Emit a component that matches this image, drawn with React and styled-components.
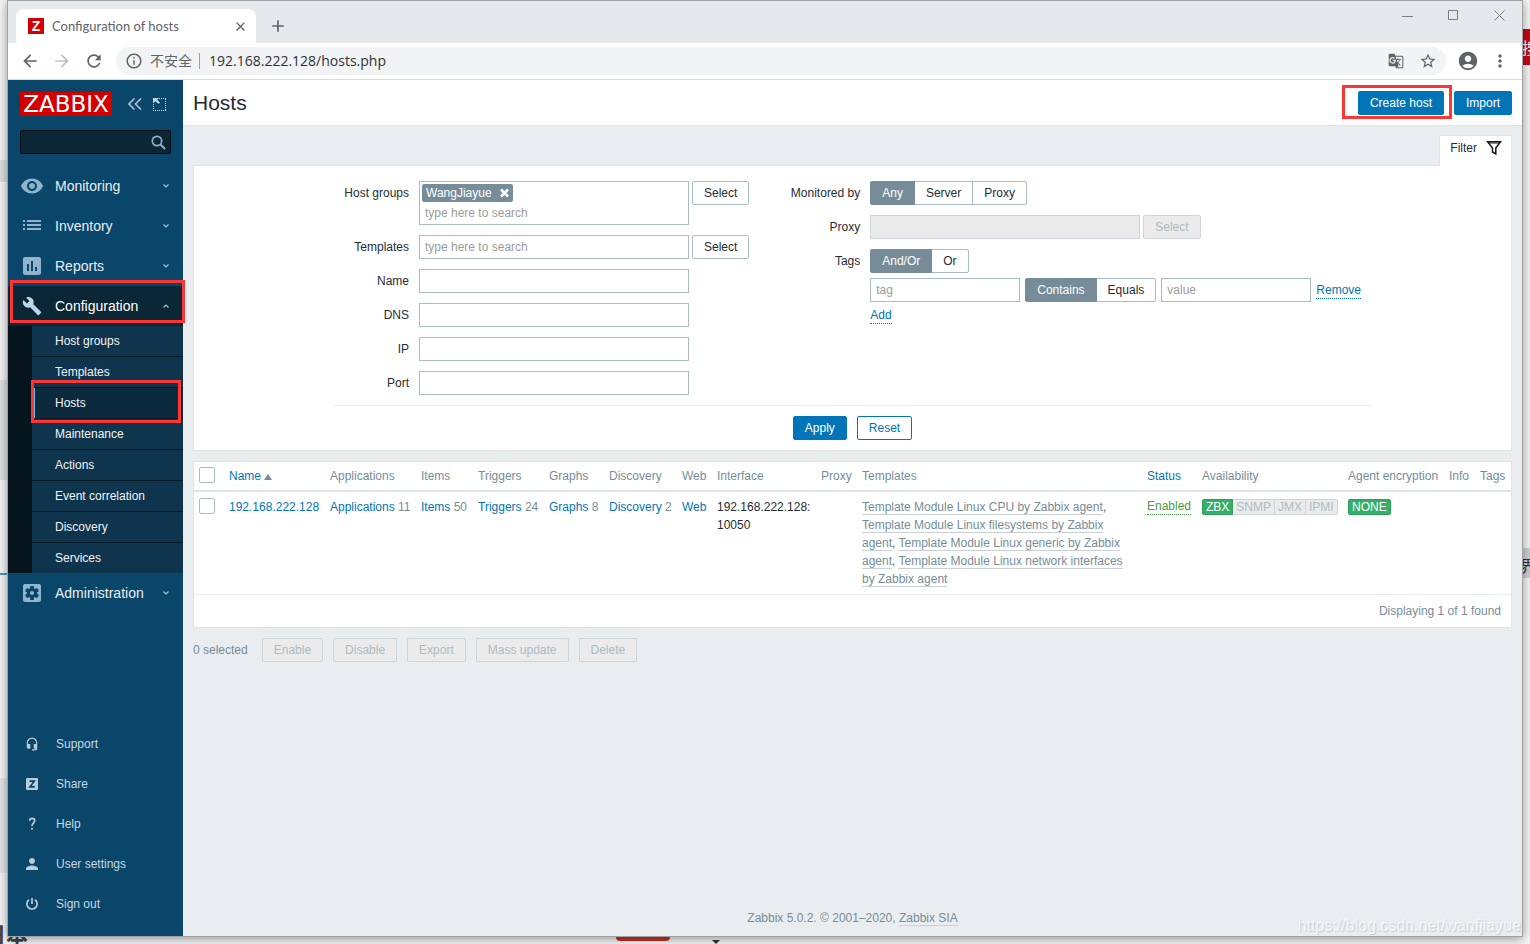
import React from "react";
import styled, { createGlobalStyle, css } from "styled-components";
import {
  MdArrowBack,
  MdArrowForward,
  MdRefresh,
  MdInfoOutline,
  MdGTranslate,
  MdStarBorder,
  MdAccountCircle,
  MdMoreVert,
  MdVisibility,
  MdAssessment,
  MdBuild,
  MdHeadsetMic,
  MdPerson,
  MdClose,
  MdAdd,
} from "react-icons/md";

const c = {
  navy: "#0a466a",
  link: "#0275b8",
  text: "#1f2c33",
  grey: "#768d99",
  line: "#dfe4e7",
  field: "#acbbc2",
  page: "#e9edf0",
};

const Global = createGlobalStyle`
  *, *::before, *::after { box-sizing: border-box; }
  body { margin: 0; font: 12px/18px "Liberation Sans", Arial, sans-serif; color: ${c.text}; }
  button, input { font: inherit; color: inherit; margin: 0; }
  ul { list-style: none; margin: 0; padding: 0; }
  svg { display: block; flex: none; }
`;

/* ---------- desktop behind the browser ---------- */

const Desktop = styled.div`
  position: relative;
  display: flex;
  min-height: 100vh;
  padding: 0 7px 7px;
  background: #f6f6f7;
  overflow: hidden;
`;

const Patch = styled.div`
  position: absolute;
  width: ${(p) => p.$w}px;
  height: ${(p) => p.$h}px;
  top: ${(p) => p.$top}px;
  ${(p) => p.$side}: ${(p) => p.$x || 0}px;
  background: ${(p) => p.$bg};
`;

const PillBehind = styled.div`
  position: absolute;
  left: 616px;
  bottom: 3px;
  width: 54px;
  height: 20px;
  border-radius: 4px;
  background: #c9302c;
`;

const ArrowBehind = styled.div`
  position: absolute;
  left: 712px;
  bottom: 0;
  border: 4px solid transparent;
  border-top-color: #333;
  border-bottom: 0;
`;

const GlyphBehind = styled.span`
  position: absolute;
  ${(p) => p.$side}: ${(p) => p.$x}px;
  top: ${(p) => p.$top}px;
  font: ${(p) => p.$font} "Noto Sans CJK SC", sans-serif;
  color: ${(p) => p.$color};
  white-space: nowrap;
`;

const Window = styled.div`
  position: relative;
  flex: 1;
  min-width: 0;
  display: flex;
  flex-direction: column;
  border: 1px solid #a0a1a3;
  background: ${c.page};
  box-shadow: 0 2px 10px rgba(0, 0, 0, 0.4);
`;

/* ---------- browser chrome ---------- */

const IconButton = styled.button`
  display: flex;
  align-items: center;
  justify-content: center;
  width: ${(p) => p.$size || 20}px;
  height: ${(p) => p.$size || 20}px;
  padding: 0;
  border: 0;
  background: none;
  color: ${(p) => p.$color || "#5f6368"};
`;

const TabStrip = styled.div`
  display: flex;
  align-items: flex-end;
  height: 42px;
  padding-left: 8px;
  background: #e6e9ec;
`;

const Tab = styled.div`
  display: flex;
  align-items: center;
  gap: 8px;
  width: 240px;
  height: 34px;
  padding: 0 6px 0 12px;
  border-radius: 8px 8px 0 0;
  background: #fff;
  font: 13px/18px Lato, "Open Sans", sans-serif;
  color: #5f6368;
`;

const TabTitle = styled.span`
  flex: 1;
  white-space: nowrap;
`;

const Favicon = styled.span`
  width: 16px;
  height: 16px;
  background: #d40000;
  color: #fff;
  font: bold 14px/16px "Liberation Sans", sans-serif;
  text-align: center;
`;

const NewTab = styled.div`
  padding: 0 0 7px 12px;
`;

const WindowButtons = styled.div`
  display: flex;
  gap: 26px;
  align-self: flex-start;
  margin-left: auto;
  padding: 4px 13px 0 0;
`;

const Toolbar = styled.div`
  display: flex;
  align-items: center;
  gap: 12px;
  height: 37px;
  padding: 0 12px;
  background: #fff;
  border-bottom: 1px solid #d9dbde;
`;

const AddressBar = styled.div`
  flex: 1;
  display: flex;
  align-items: center;
  gap: 7px;
  height: 28px;
  padding: 0 8px 0 9px;
  border-radius: 14px;
  background: #f1f3f4;
  font: 14px/18px "Open Sans", "Noto Sans CJK SC", sans-serif;
  color: #5f6368;
`;

const AddressActions = styled.div`
  display: flex;
  gap: 12px;
`;

const Insecure = styled.span`
  padding-right: 7px;
  margin-right: 2px;
  border-right: 1px solid #9aa0a6;
  line-height: 16px;
`;

const AddressInput = styled.input`
  flex: 1;
  min-width: 0;
  padding: 0;
  border: 0;
  background: none;
  color: #303236;
`;

/* ---------- sidebar ---------- */

const Page = styled.div`
  flex: 1;
  display: flex;
  min-height: 0;
`;

const Sidebar = styled.nav`
  flex: none;
  display: flex;
  flex-direction: column;
  width: 175px;
  padding-bottom: 12px;
  background: ${c.navy};
`;

const SidebarHead = styled.div`
  display: flex;
  align-items: center;
  padding: 12px 12px 14px;
`;

const Logo = styled.a`
  flex: none;
  width: 92px;
  height: 24px;
  margin-right: 16px;
  background: #d40000;
  color: #fff;
  font: 23px/24px "DejaVu Sans", sans-serif;
  text-align: center;
  text-decoration: none;
`;

const HeadIcons = styled.div`
  display: flex;
  gap: 10px;
`;

const Search = styled.form`
  display: flex;
  align-items: center;
  height: 24px;
  margin: 0 12px 12px;
  padding-right: 4px;
  border: 1px solid #050d12;
  border-radius: 2px;
  background: #0b2635;
`;

const SearchInput = styled.input`
  flex: 1;
  min-width: 0;
  padding: 0 4px;
  border: 0;
  background: none;
  color: #fff;
`;

const MenuItem = styled.li`
  position: relative;
`;

const MenuLink = styled.a`
  display: flex;
  align-items: center;
  height: 40px;
  padding: 0 14px 0 12px;
  font-size: 14px;
  color: ${(p) => (p.$open ? "#fff" : "#ebeef0")};
  background: ${(p) => (p.$open ? "#0b2635" : "none")};
  text-decoration: none;
`;

const MenuIcon = styled.span`
  display: flex;
  justify-content: center;
  width: 24px;
  margin-right: 11px;
  color: ${(p) => (p.$open ? "#b9d9ee" : "#8fb4cc")};
`;

const MenuLabel = styled.span`
  flex: 1;
`;

const SubMenu = styled.ul`
  padding-left: 24px;
  background: #05141d;
`;

const SubItem = styled.li`
  position: relative;
  border-bottom: 1px solid #051923;
  &:last-child { border-bottom: 0; }
`;

const SubLink = styled.a`
  display: block;
  height: 30px;
  padding-left: 20px;
  line-height: 30px;
  border-left: 3px solid ${(p) => (p.$active ? "#78b6de" : "#0f344d")};
  background: ${(p) => (p.$active ? "#0b2a3d" : "#0f344d")};
  color: #f2f4f5;
  text-decoration: none;
`;

const FootMenu = styled.ul`
  margin-top: auto;
`;

const FootLink = styled.a`
  display: flex;
  align-items: center;
  gap: 16px;
  height: 40px;
  padding-left: 16px;
  color: #c9d8e1;
  text-decoration: none;
`;

const FootIcon = styled.span`
  display: flex;
  justify-content: center;
  width: 16px;
  font-size: 16px;
  color: #b8ccd8;
`;

/* red frame drawn over a control */
const Mark = styled.span`
  position: absolute;
  z-index: 2;
  inset: ${(p) => p.$inset};
  border: 3px solid #fc3535;
  pointer-events: none;
`;

/* ---------- content ---------- */

const Main = styled.main`
  flex: 1;
  min-width: 0;
  display: flex;
  flex-direction: column;
`;

const Header = styled.header`
  display: flex;
  align-items: center;
  justify-content: space-between;
  height: 46px;
  padding: 0 10px;
  background: #fff;
  border-bottom: 1px solid ${c.line};
`;

const Title = styled.h1`
  margin: 0;
  font-size: 21px;
  font-weight: normal;
  line-height: 24px;
`;

const Buttons = styled.div`
  display: flex;
  justify-content: ${(p) => (p.$center ? "center" : "flex-start")};
  gap: 10px;
`;

const Marked = styled.div`
  position: relative;
`;

const Button = styled.button`
  flex: none;
  height: 24px;
  padding: 0 11px;
  border: 1px solid ${c.link};
  border-radius: 2px;
  background: ${c.link};
  color: #fff;
  line-height: 22px;
  ${(p) => p.$kind === "outline" && css`
    background: #fff;
    color: ${c.link};
  `}
  ${(p) => p.$kind === "plain" && css`
    border-color: ${c.field};
    background: #fff;
    color: ${c.text};
  `}
  &:disabled {
    border-color: #ccd5d9;
    background: #ebebeb;
    color: ${c.field};
  }
`;

const Body = styled.div`
  padding: 9px 10px 0;
`;

const FilterTab = styled.button`
  position: relative;
  z-index: 1;
  display: flex;
  align-items: center;
  gap: 9px;
  height: 31px;
  margin: 0 0 -1px auto;
  padding: 0 9px 7px 10px;
  border: 1px solid ${c.line};
  border-bottom: 0;
  background: #fff;
`;

const FilterPanel = styled.form`
  display: flex;
  flex-direction: column;
  align-items: center;
  padding: 15px 10px 10px;
  border: 1px solid ${c.line};
  background: #fff;
`;

const FilterInner = styled.div`
  width: 1037px;
  max-width: 100%;
`;

const FilterColumns = styled.div`
  display: flex;
  justify-content: space-between;
  padding: 0 10px 10px 0;
  margin-bottom: 10px;
  border-bottom: 1px solid ${c.page};
`;

const Fields = styled.div`
  display: grid;
  grid-template-columns: ${(p) => p.$label}px auto;
  gap: 10px;
  align-content: start;
`;

const Label = styled.label`
  line-height: 24px;
  text-align: right;
`;

const Cell = styled.div`
  display: flex;
  flex-wrap: wrap;
  align-items: flex-start;
  gap: ${(p) => p.$gap || 3}px;
`;

const Stack = styled.div`
  display: flex;
  flex-direction: column;
  align-items: flex-start;
  gap: 5px;
`;

const Input = styled.input`
  width: ${(p) => p.$w || 270}px;
  height: 24px;
  padding: 0 5px;
  border: 1px solid ${c.field};
  background: #fff;
  &::placeholder { color: #9c9c9c; opacity: 1; }
  &:disabled { border-color: #ccd5d9; background: #ebebeb; }
`;

const MultiSelect = styled.div`
  width: 270px;
  padding: 2px;
  border: 1px solid ${c.field};
`;

const Chip = styled.span`
  display: flex;
  align-items: center;
  gap: 7px;
  width: max-content;
  height: 18px;
  padding: 0 3px 0 4px;
  border-radius: 2px;
  background: ${c.grey};
  color: #fff;
`;

const BareInput = styled.input`
  display: block;
  width: 100%;
  height: 20px;
  padding: 2px 3px 0;
  border: 0;
  &::placeholder { color: #9c9c9c; opacity: 1; }
`;

const Segments = styled.div`
  display: flex;
`;

const Segment = styled.label`
  height: 24px;
  padding: 0 11px;
  margin-left: -1px;
  border: 1px solid ${c.field};
  line-height: 22px;
  &:first-child { margin-left: 0; border-radius: 2px 0 0 2px; }
  &:last-child { border-radius: 0 2px 2px 0; }
  &:has(input:checked) {
    position: relative;
    border-color: ${c.grey};
    background: ${c.grey};
    color: #fff;
  }
`;

const HiddenRadio = styled.input`
  position: absolute;
  width: 1px;
  height: 1px;
  opacity: 0;
`;

const DottedButton = styled.button`
  display: block;
  padding: 0;
  border: 0;
  border-bottom: 1px dotted ${(p) => p.$color || c.link};
  background: none;
  color: ${(p) => p.$color || c.link};
  line-height: 16px;
`;

const TagRow = styled.div`
  display: flex;
  align-items: center;
  gap: 5px;
`;

/* ---------- host table ---------- */

const HostTable = styled.table`
  width: 100%;
  margin-top: 10px;
  table-layout: fixed;
  border-collapse: separate;
  border-spacing: 0;
  border: 1px solid ${c.line};
  background: #fff;
`;

const Col = styled.col`
  width: ${(p) => (p.$w ? `${p.$w}px` : "auto")};
`;

const Th = styled.th`
  height: 30px;
  padding: 5px 5px 0;
  border-bottom: 2px solid ${c.line};
  color: ${c.grey};
  font-weight: normal;
  text-align: left;
  vertical-align: top;
  white-space: nowrap;
`;

const Td = styled.td`
  padding: 6px 5px;
  border-bottom: 1px solid ${c.page};
  vertical-align: top;
  white-space: ${(p) => (p.$wrap ? "normal" : "nowrap")};
  color: ${(p) => p.$color || c.text};
`;

const FootTd = styled.td`
  height: 32px;
  padding: 0 10px;
  color: ${c.grey};
  text-align: right;
`;

const Check = styled.input`
  appearance: none;
  display: block;
  width: 16px;
  height: 16px;
  border: 1px solid ${c.field};
  border-radius: 2px;
  background: #fff;
`;

const Link = styled.a`
  color: ${c.link};
  text-decoration: none;
`;

const SortMark = styled.span`
  display: inline-block;
  margin-left: 3px;
  border: 4px solid transparent;
  border-top: 0;
  border-bottom: 6px solid ${c.grey};
`;

const GreyLink = styled.a`
  border-bottom: 1px solid #c9d1d5;
  color: ${c.grey};
  text-decoration: none;
`;

const Badges = styled.div`
  display: flex;
  padding-top: 1px;
`;

const Badge = styled.span`
  height: 16px;
  padding: 0 3px;
  border: 1px solid ${(p) => (p.$on ? "#2f9f5e" : "#ccd5d9")};
  border-left-width: ${(p) => (p.$joined ? 0 : 1)}px;
  background: ${(p) => (p.$on ? "#34af67" : "#ebebeb")};
  color: ${(p) => (p.$on ? "#fff" : c.field)};
  line-height: 15px;
  &:first-child { border-radius: 2px 0 0 2px; }
  &:last-child { border-radius: 0 2px 2px 0; }
  &:only-child { border-radius: 2px; }
`;

const Actions = styled.div`
  display: flex;
  align-items: center;
  gap: 10px;
  padding-top: 10px;
  color: ${c.grey};
`;

const Selected = styled.span`
  margin-right: 4px;
`;

const Footer = styled.footer`
  margin-top: auto;
  padding: 10px 10px 9px;
  color: ${c.grey};
  text-align: center;
`;

const Watermark = styled.div`
  position: absolute;
  right: 1px;
  bottom: 1px;
  color: rgba(255, 255, 255, 0.7);
  font-size: 16px;
  text-shadow: 1px 1px 1px rgba(120, 130, 140, 0.3);
`;

/* ---------- drawings ---------- */

const ListIcon = () => (
  <svg width="18" height="12" viewBox="0 0 18 12" fill="currentColor">
    <path d="M0 0h2v2H0zM4 0h14v2H4zM0 4h2v2H0zM4 4h14v2H4zM0 8h2v2H0zM4 8h14v2H4z" />
  </svg>
);

const GearIcon = () => (
  <svg width="18" height="18" viewBox="0 0 18 18">
    <rect width="18" height="18" rx="2" fill="currentColor" />
    <g fill={c.navy}>
      <circle cx="9" cy="9" r="5" />
      {[0, 60, 120].map((a) => (
        <rect key={a} x="7" y="2" width="4" height="14" rx="1" transform={`rotate(${a} 9 9)`} />
      ))}
    </g>
    <circle cx="9" cy="9" r="2" fill="currentColor" />
  </svg>
);

const Chevron = ({ up }) => (
  <svg width="6" height="4" viewBox="0 0 6 4" fill="none" stroke="#a9c3d3" strokeWidth="1.2">
    <path d={up ? "M.5 3.5 3 1l2.5 2.5" : "M.5.5 3 3l2.500-2.500"} />
  </svg>
);

const CollapseIcon = () => (
  <svg width="14" height="12" viewBox="0 0 14 12" fill="none" stroke="#a9c3d3" strokeWidth="1.6">
    <path d="M6.500.5 1 6l5.500 5.500M13 .5 7.500 6l5.500 5.500" />
  </svg>
);

const KioskIcon = () => (
  <svg width="13" height="13" viewBox="0 0 13 13">
    <path d="M6 .5h7M12.500 1v12M.5 6v7M0 12.500h13" stroke="#c5d6e1" strokeDasharray="1 1" fill="none" />
    <path d="M0 0h6L4.200 1.800 7 4.600 5.600 6 2.300 3.200 0 5.500z" fill="#c5d6e1" />
  </svg>
);

const SearchIcon = () => (
  <svg width="15" height="15" viewBox="0 0 15 15" fill="none" stroke="#8fb0c4">
    <circle cx="6" cy="6" r="4.700" strokeWidth="1.700" />
    <path d="m9.500 9.500 4.500 4.500" strokeWidth="2" />
  </svg>
);

const FunnelIcon = () => (
  <svg width="16" height="16" viewBox="0 0 16 16" fill="none" stroke="#1a1a1a" strokeWidth="1.500">
    <path d="M1.500 1.700h13L9.800 8v6L6.500 12V8z" />
    <path d="M2 3h12" strokeWidth="1" />
  </svg>
);

const ShareIcon = () => (
  <svg width="12" height="12" viewBox="0 0 12 12">
    <rect width="12" height="12" rx="1" fill="currentColor" />
    <path d="M3.500 3.200h4.800L4 8.800h4.800" fill="none" stroke={c.navy} strokeWidth="1.700" />
  </svg>
);

const HelpIcon = () => (
  <svg width="12" height="14" viewBox="0 0 12 14" fill="none" stroke="currentColor" strokeWidth="1.700">
    <path d="M3.500 3.800C3.500 .6 8.700.6 8.700 3.800 8.700 6 6 6 6 9M6 10.800v2" />
  </svg>
);

const PowerIcon = () => (
  <svg width="12" height="12" viewBox="0 0 12 12" fill="none" stroke="currentColor" strokeWidth="1.700">
    <path d="M6 0v6M3 1.800a5.100 5.100 0 1 0 6 0" />
  </svg>
);

const CrossIcon = () => (
  <svg width="11" height="10" viewBox="0 0 11 10" stroke="#fff" strokeWidth="2.600">
    <path d="m2 1.500 7 7M9 1.500l-7 7" />
  </svg>
);

const MinIcon = () => (
  <svg width="11" height="11" viewBox="0 0 11 11" stroke="#7b7d80"><path d="M0 6.500h11" /></svg>
);
const MaxIcon = () => (
  <svg width="11" height="11" viewBox="0 0 11 11" stroke="#7b7d80" fill="none"><path d="M.5.5h9v9h-9z" /></svg>
);
const CloseIcon = () => (
  <svg width="11" height="11" viewBox="0 0 11 11" stroke="#7b7d80"><path d="m.5.500 10 10M10.500.500l-10 10" /></svg>
);

/* ---------- data ---------- */

const menu = [
  { label: "Monitoring", icon: <MdVisibility size={24} /> },
  { label: "Inventory", icon: <ListIcon /> },
  { label: "Reports", icon: <MdAssessment size={24} /> },
  {
    label: "Configuration",
    icon: <MdBuild size={20} />,
    items: ["Host groups", "Templates", "Hosts", "Maintenance", "Actions", "Event correlation", "Discovery", "Services"],
  },
  { label: "Administration", icon: <GearIcon /> },
];

const footMenu = [
  ["Support", <MdHeadsetMic size={14} />],
  ["Share", <ShareIcon />],
  ["Help", <HelpIcon />],
  ["User settings", <MdPerson size={18} />],
  ["Sign out", <PowerIcon />],
];

const columns = [
  ["Applications", 91], ["Items", 57], ["Triggers", 71], ["Graphs", 60], ["Discovery", 73], ["Web", 35],
  ["Interface", 104], ["Proxy", 41], ["Templates", 0], ["Status", 55], ["Availability", 146],
  ["Agent encryption", 101], ["Info", 31], ["Tags", 36],
];

const counts = [["Applications", 11], ["Items", 50], ["Triggers", 24], ["Graphs", 8], ["Discovery", 2], ["Web", null]];

const templates = [
  "Template Module Linux CPU by Zabbix agent",
  "Template Module Linux filesystems by Zabbix agent",
  "Template Module Linux generic by Zabbix agent",
  "Template Module Linux network interfaces by Zabbix agent",
];

function SegmentGroup({ name, options }) {
  return (
    <Segments role="radiogroup" aria-label={name}>
      {options.map((o, i) => (
        <Segment key={o}>
          <HiddenRadio type="radio" name={name} defaultChecked={i === 0} />
          {o}
        </Segment>
      ))}
    </Segments>
  );
}

function Chrome() {
  return (
    <>
      <TabStrip>
        <Tab>
          <Favicon>Z</Favicon>
          <TabTitle>Configuration of hosts</TabTitle>
          <IconButton aria-label="Close tab"><MdClose size={15} /></IconButton>
        </Tab>
        <NewTab>
          <IconButton aria-label="New tab"><MdAdd size={20} /></IconButton>
        </NewTab>
        <WindowButtons>
          <IconButton aria-label="Minimize"><MinIcon /></IconButton>
          <IconButton aria-label="Maximize"><MaxIcon /></IconButton>
          <IconButton aria-label="Close"><CloseIcon /></IconButton>
        </WindowButtons>
      </TabStrip>
      <Toolbar>
        <IconButton aria-label="Back"><MdArrowBack size={20} /></IconButton>
        <IconButton aria-label="Forward" $color="#bdc1c6"><MdArrowForward size={20} /></IconButton>
        <IconButton aria-label="Reload"><MdRefresh size={20} /></IconButton>
        <AddressBar>
          <MdInfoOutline size={18} />
          <Insecure>不安全</Insecure>
          <AddressInput aria-label="Address" defaultValue="192.168.222.128/hosts.php" />
          <AddressActions>
            <IconButton aria-label="Translate"><MdGTranslate size={16} /></IconButton>
            <IconButton aria-label="Bookmark"><MdStarBorder size={18} /></IconButton>
          </AddressActions>
        </AddressBar>
        <IconButton aria-label="Profile"><MdAccountCircle size={22} /></IconButton>
        <IconButton aria-label="More"><MdMoreVert size={20} /></IconButton>
      </Toolbar>
    </>
  );
}

function SideNav() {
  return (
    <Sidebar>
      <SidebarHead>
        <Logo href="#">ZABBIX</Logo>
        <HeadIcons>
          <IconButton $size={14} aria-label="Collapse sidebar"><CollapseIcon /></IconButton>
          <IconButton $size={14} aria-label="Hide sidebar"><KioskIcon /></IconButton>
        </HeadIcons>
      </SidebarHead>
      <Search>
        <SearchInput aria-label="Search" />
        <IconButton $size={15} type="button" aria-label="Search"><SearchIcon /></IconButton>
      </Search>
      <ul>
        {menu.map((m) => (
          <MenuItem key={m.label}>
            <Marked>
              <MenuLink href="#" $open={!!m.items}>
                <MenuIcon $open={!!m.items}>{m.icon}</MenuIcon>
                <MenuLabel>{m.label}</MenuLabel>
                <Chevron up={!!m.items} />
              </MenuLink>
              {m.items && <Mark $inset="-6px -2px 3px 2px" />}
            </Marked>
            {m.items && (
              <SubMenu>
                {m.items.map((s) => (
                  <SubItem key={s}>
                    <SubLink href="#" $active={s === "Hosts"}>{s}</SubLink>
                    {s === "Hosts" && <Mark $inset="-8px 2px -5px -1px" />}
                  </SubItem>
                ))}
              </SubMenu>
            )}
          </MenuItem>
        ))}
      </ul>
      <FootMenu>
        {footMenu.map(([label, icon]) => (
          <li key={label}>
            <FootLink href="#"><FootIcon>{icon}</FootIcon>{label}</FootLink>
          </li>
        ))}
      </FootMenu>
    </Sidebar>
  );
}

function Filter() {
  return (
    <FilterPanel onSubmit={(e) => e.preventDefault()}>
      <FilterInner>
        <FilterColumns>
          <Fields $label={75}>
            <Label htmlFor="groups">Host groups</Label>
            <Cell>
              <MultiSelect>
                <Chip>WangJiayue <IconButton $size={11} type="button" aria-label="Remove WangJiayue"><CrossIcon /></IconButton></Chip>
                <BareInput id="groups" placeholder="type here to search" />
              </MultiSelect>
              <Button $kind="plain" type="button">Select</Button>
            </Cell>
            <Label htmlFor="templates">Templates</Label>
            <Cell>
              <Input id="templates" placeholder="type here to search" />
              <Button $kind="plain" type="button">Select</Button>
            </Cell>
            {["Name", "DNS", "IP", "Port"].map((f) => (
              <React.Fragment key={f}>
                <Label htmlFor={f}>{f}</Label>
                <Cell><Input id={f} /></Cell>
              </React.Fragment>
            ))}
          </Fields>
          <Fields $label={75}>
            <Label as="span">Monitored by</Label>
            <SegmentGroup name="Monitored by" options={["Any", "Server", "Proxy"]} />
            <Label htmlFor="proxy">Proxy</Label>
            <Cell>
              <Input id="proxy" disabled />
              <Button $kind="plain" type="button" disabled>Select</Button>
            </Cell>
            <Label as="span">Tags</Label>
            <Stack>
              <SegmentGroup name="Tags" options={["And/Or", "Or"]} />
              <TagRow>
                <Input $w={150} placeholder="tag" aria-label="tag" />
                <SegmentGroup name="Tag operator" options={["Contains", "Equals"]} />
                <Input $w={150} placeholder="value" aria-label="value" />
                <DottedButton type="button">Remove</DottedButton>
              </TagRow>
              <DottedButton type="button">Add</DottedButton>
            </Stack>
          </Fields>
        </FilterColumns>
        <Buttons $center>
          <Button type="submit">Apply</Button>
          <Button type="reset" $kind="outline">Reset</Button>
        </Buttons>
      </FilterInner>
    </FilterPanel>
  );
}

function Hosts() {
  return (
    <HostTable>
      <colgroup>
        <Col $w={30} />
        <Col $w={101} />
        {columns.map(([n, w]) => <Col key={n} $w={w} />)}
      </colgroup>
      <thead>
        <tr>
          <Th><Check type="checkbox" aria-label="Select all" /></Th>
          <Th><Link href="#">Name<SortMark /></Link></Th>
          {columns.map(([n]) => <Th key={n}>{n === "Status" ? <Link href="#">{n}</Link> : n}</Th>)}
        </tr>
      </thead>
      <tbody>
        <tr>
          <Td><Check type="checkbox" aria-label="Select 192.168.222.128" /></Td>
          <Td><Link href="#">192.168.222.128</Link></Td>
          {counts.map(([n, k]) => (
            <Td key={n} $color={c.grey}><Link href="#">{n}</Link>{k !== null && ` ${k}`}</Td>
          ))}
          <Td $wrap>192.168.222.128:<wbr />10050</Td>
          <Td />
          <Td $wrap $color="#4d606a">
            {templates.map((t, i) => (
              <React.Fragment key={t}>{i > 0 && ", "}<GreyLink href="#">{t}</GreyLink></React.Fragment>
            ))}
          </Td>
          <Td><DottedButton $color="#429e47">Enabled</DottedButton></Td>
          <Td>
            <Badges>
              <Badge $on>ZBX</Badge>
              <Badge $joined>SNMP</Badge>
              <Badge $joined>JMX</Badge>
              <Badge $joined>IPMI</Badge>
            </Badges>
          </Td>
          <Td><Badges><Badge $on>NONE</Badge></Badges></Td>
          <Td />
          <Td />
        </tr>
      </tbody>
      <tfoot>
        <tr><FootTd colSpan={16}>Displaying 1 of 1 found</FootTd></tr>
      </tfoot>
    </HostTable>
  );
}

export default function App() {
  return (
    <Desktop>
      <Global />
      <Patch $side="left" $top={160} $w={7} $h={22} $bg="#dfe2e5" />
      <Patch $side="left" $top={380} $w={7} $h={100} $bg="#dfe2e5" />
      <Patch $side="left" $top={573} $w={7} $h={2} $bg="#4a9ac9" />
      <Patch $side="left" $top={778} $w={7} $h={95} $bg="#e3e6e9" />
      <Patch $side="right" $top={29} $w={7} $h={36} $bg="#c20c18" />
      <Patch $side="right" $top={548} $w={7} $h={30} $bg="#d0d1d3" />
      <GlyphBehind $side="right" $x={-8} $top={36} $font="16px/22px" $color="#fff">搜</GlyphBehind>
      <GlyphBehind $side="right" $x={-6} $top={554} $font="16px/22px" $color="#333">界</GlyphBehind>
      <GlyphBehind $side="left" $x={-16} $top={921} $font="bold 22px/24px" $color="#444">日本</GlyphBehind>
      <PillBehind />
      <ArrowBehind />
      <Window>
        <Chrome />
        <Page>
          <SideNav />
          <Main>
            <Header>
              <Title>Hosts</Title>
              <Buttons>
                <Marked>
                  <Button>Create host</Button>
                  <Mark $inset="-6px -8px -4px -16px" />
                </Marked>
                <Button>Import</Button>
              </Buttons>
            </Header>
            <Body>
              <FilterTab>Filter <FunnelIcon /></FilterTab>
              <Filter />
              <Hosts />
              <Actions>
                <Selected>0 selected</Selected>
                {["Enable", "Disable", "Export", "Mass update", "Delete"].map((a) => (
                  <Button key={a} disabled>{a}</Button>
                ))}
              </Actions>
            </Body>
            <Footer>Zabbix 5.0.2. © 2001–2020, <GreyLink href="#">Zabbix SIA</GreyLink></Footer>
          </Main>
        </Page>
        <Watermark>https://blog.csdn.net/wanfjiayue</Watermark>
      </Window>
    </Desktop>
  );
}
